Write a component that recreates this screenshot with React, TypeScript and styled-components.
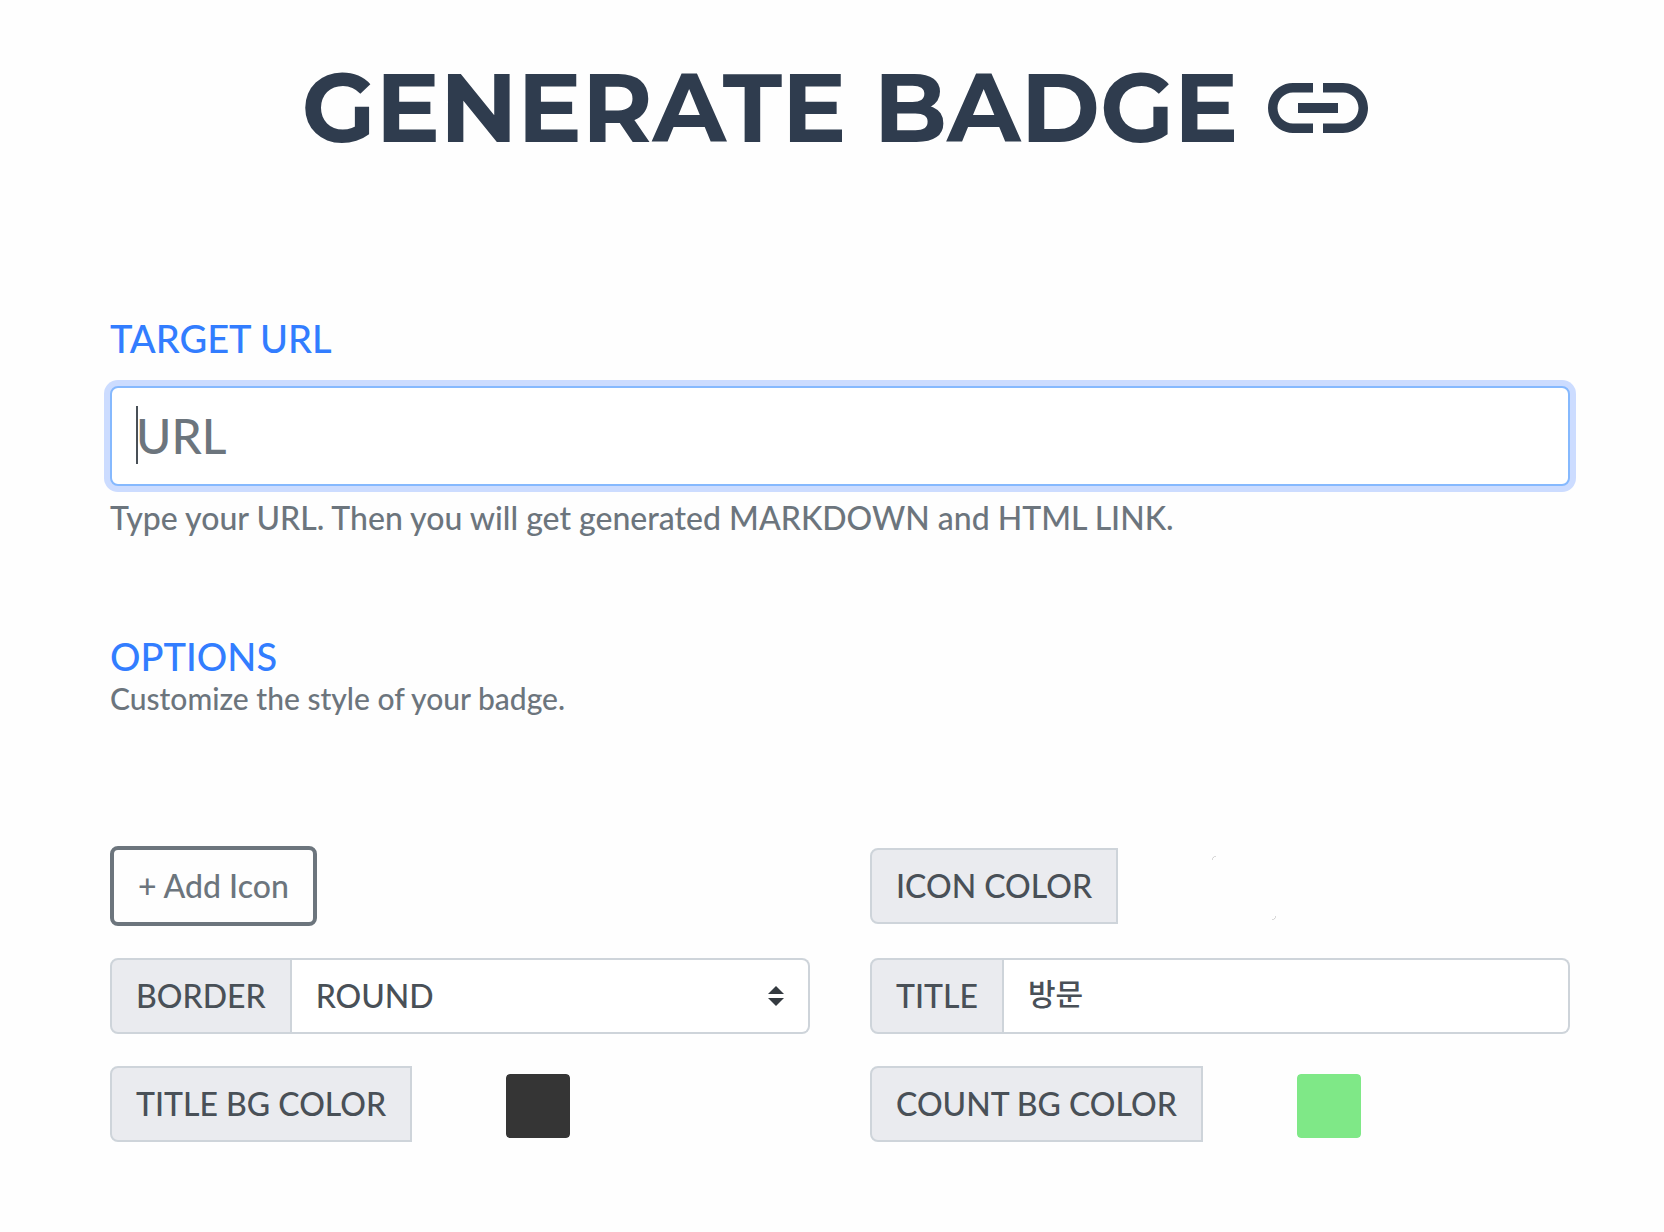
import React, { useState } from "react";
import styled, { createGlobalStyle, css } from "styled-components";

const colors = {
  ink: "#2f3c4e",
  primary: "#327dff",
  muted: "#6c757d",
  text: "#495057",
  line: "#ced4da",
  addon: "#eaebef",
  page: "#fefefe",
};

const GlobalStyle = createGlobalStyle`
  *, *::before, *::after { box-sizing: border-box; }
  body {
    margin: 0;
    background: ${colors.page};
    color: ${colors.text};
    font-family: Lato, "Noto Sans CJK KR", sans-serif;
    font-size: 32px;
    font-weight: 500;
    line-height: 48px;
  }
  input, select, button { font: inherit; color: inherit; margin: 0; }
`;

const Page = styled.main`
  padding: 48px 94px 90px 110px;
`;

const Title = styled.h1`
  display: flex;
  align-items: center;
  justify-content: center;
  gap: 20px;
  margin: 0;
  color: ${colors.ink};
  font-family: Montserrat, Inter, sans-serif;
  font-size: 96px;
  font-weight: 700;
  line-height: 120px;
  white-space: nowrap;
`;

const LinkIcon = styled.svg`
  flex: none;
  width: 120px;
  height: 120px;
  fill: currentColor;
`;

const Section = styled.section<{ $top: number }>`
  display: flex;
  flex-direction: column;
  align-items: stretch;
  margin-top: ${(p) => p.$top}px;
`;

const headingText = css`
  margin: 0;
  color: ${colors.primary};
  font-size: 38px;
  font-weight: 500;
  line-height: 48px;
`;

const FieldLabel = styled.label`
  ${headingText}
`;

const SectionTitle = styled.h2`
  ${headingText}
`;

const Hint = styled.p<{ $small?: boolean }>`
  margin: 0;
  color: ${colors.muted};
  font-size: ${(p) => (p.$small ? 30 : 32)}px;
  line-height: 36px;
`;

const UrlField = styled.div`
  position: relative;
  margin: 24px 0 14px;
`;

const UrlInput = styled.input`
  display: block;
  width: 100%;
  height: 100px;
  padding: 0 24px 2px;
  border: 2px solid #86b9fe;
  border-radius: 8px;
  outline: none;
  background: #fff;
  box-shadow: 0 0 0 6px #ccdcff;
  font-size: 48px;
  caret-color: transparent;

  &::placeholder {
    color: ${colors.muted};
    opacity: 1;
  }
`;

const Caret = styled.span`
  position: absolute;
  top: 20px;
  left: 26px;
  width: 2px;
  height: 58px;
  background: ${colors.text};
`;

const Options = styled.div`
  display: grid;
  grid-template-columns: 1fr 1fr;
  align-items: center;
  gap: 32px 60px;
  margin-top: 130px;
`;

const AddButton = styled.button`
  justify-self: start;
  height: 80px;
  padding: 0 24px;
  border: 4px solid ${colors.muted};
  border-radius: 8px;
  background: transparent;
  color: ${colors.muted};
  cursor: pointer;
`;

const Group = styled.div`
  display: flex;
  height: 76px;
`;

const Addon = styled.label`
  flex: none;
  display: flex;
  align-items: center;
  padding: 0 24px;
  border: 2px solid ${colors.line};
  border-radius: 8px 0 0 8px;
  background: ${colors.addon};
  white-space: nowrap;
`;

const control = css`
  width: 100%;
  height: 76px;
  min-width: 0;
  padding: 0 24px;
  border: 2px solid ${colors.line};
  border-left: 0;
  border-radius: 0 8px 8px 0;
  outline: none;
  background: #fff;
`;

const TextInput = styled.input`
  ${control}
  flex: 1;
  padding-bottom: 8px;
  font-size: 30px;
`;

const SelectBox = styled.div`
  position: relative;
  flex: 1;
`;

const Select = styled.select`
  ${control}
  appearance: none;
`;

const SelectArrows = styled.svg`
  position: absolute;
  top: 28px;
  right: 26px;
  width: 16px;
  height: 20px;
  fill: #343a40;
  pointer-events: none;
`;

const Swatch = styled.input<{ $edged?: boolean }>`
  appearance: none;
  width: 64px;
  height: 64px;
  margin: 8px 0 4px 94px;
  padding: 0;
  border: 0;
  border-radius: 4px;
  background: none;
  overflow: hidden;
  cursor: pointer;

  &::-webkit-color-swatch-wrapper {
    padding: 0;
  }

  &::-webkit-color-swatch {
    border: 0;
    border-radius: 4px;
    ${(p) =>
      p.$edged &&
      css`
        background-image:
          radial-gradient(circle at 100% 100%, transparent 55%, #c4c4c4 65%),
          radial-gradient(circle at 0 0, transparent 55%, #c4c4c4 65%);
        background-position: left top, right bottom;
        background-repeat: no-repeat;
        background-size: 4px 4px;
      `}
  }
`;

interface ColorFieldProps {
  id: string;
  label: string;
  initial: string;
  edged?: boolean;
}

function ColorField({ id, label, initial, edged }: ColorFieldProps) {
  const [value, setValue] = useState(initial);
  return (
    <Group>
      <Addon htmlFor={id}>{label}</Addon>
      <Swatch
        id={id}
        type="color"
        value={value}
        $edged={edged}
        onChange={(e) => setValue(e.target.value)}
      />
    </Group>
  );
}

export default function App() {
  const [url, setUrl] = useState("");
  const [title, setTitle] = useState("방문");

  return (
    <>
      <GlobalStyle />
      <Page>
        <Title>
          GENERATE BADGE
          <LinkIcon viewBox="0 0 24 24" aria-hidden="true">
            <path d="M3.9 12c0-1.71 1.39-3.1 3.1-3.1h4V7H7c-2.76 0-5 2.24-5 5s2.24 5 5 5h4v-1.9H7c-1.71 0-3.1-1.39-3.1-3.1zM8 13h8v-2H8v2zm9-6h-4v1.9h4c1.71 0 3.1 1.39 3.1 3.1s-1.39 3.1-3.1 3.1h-4V17h4c2.76 0 5-2.24 5-5s-2.24-5-5-5z" />
          </LinkIcon>
        </Title>

        <Section $top={146}>
          <FieldLabel htmlFor="url">TARGET URL</FieldLabel>
          <UrlField>
            <UrlInput
              id="url"
              type="text"
              placeholder="URL"
              value={url}
              onChange={(e) => setUrl(e.target.value)}
            />
            {url === "" && <Caret />}
          </UrlField>
          <Hint>Type your URL. Then you will get generated MARKDOWN and HTML LINK.</Hint>
        </Section>

        <Section $top={96}>
          <SectionTitle>OPTIONS</SectionTitle>
          <Hint $small>Customize the style of your badge.</Hint>
          <Options>
            <AddButton type="button">+ Add Icon</AddButton>
            <ColorField id="icon-color" label="ICON COLOR" initial="#fefefe" edged />
            <Group>
              <Addon htmlFor="border">BORDER</Addon>
              <SelectBox>
                <Select id="border" defaultValue="round">
                  <option value="round">ROUND</option>
                  <option value="flat">FLAT</option>
                </Select>
                <SelectArrows viewBox="0 0 16 20" aria-hidden="true">
                  <path d="M8 0l8 8H0zM0 12h16l-8 8z" />
                </SelectArrows>
              </SelectBox>
            </Group>
            <Group>
              <Addon htmlFor="title">TITLE</Addon>
              <TextInput
                id="title"
                type="text"
                value={title}
                onChange={(e) => setTitle(e.target.value)}
              />
            </Group>
            <ColorField id="title-bg" label="TITLE BG COLOR" initial="#353535" />
            <ColorField id="count-bg" label="COUNT BG COLOR" initial="#7fe887" />
          </Options>
        </Section>
      </Page>
    </>
  );
}
